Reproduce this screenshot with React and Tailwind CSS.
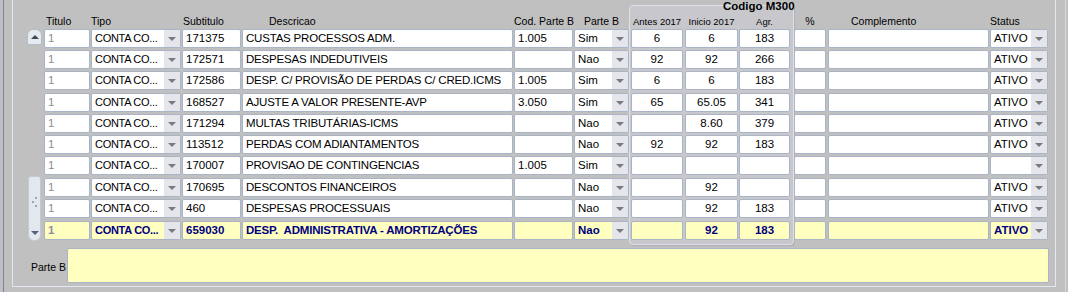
import React from "react";

const FONT = "font-['Liberation_Sans',Arial,sans-serif]";

// column geometry taken from the form (x positions relative to the first field)
const COLS = [
  { key: "titulo", label: "Titulo", w: "w-[46px]", ml: "ml-0", head: "pl-[2px] text-left text-[10.5px]", align: "text-left" },
  { key: "tipo", label: "Tipo", w: "w-[90px]", ml: "ml-[1px]", head: "pl-0 text-left text-[10.5px]", align: "text-left tracking-[-0.3px] text-[11px]", drop: true },
  { key: "sub", label: "Subtitulo", w: "w-[59px]", ml: "ml-[1px]", head: "pl-[1px] text-left text-[10.5px]", align: "text-left" },
  { key: "desc", label: "Descricao", w: "w-[271px]", ml: "ml-[1px]", head: "pl-[27px] text-left text-[10.5px]", align: "text-left tracking-[-0.2px]" },
  { key: "cod", label: "Cod. Parte B", w: "w-[59px]", ml: "ml-[1px]", head: "pl-0 text-left text-[10.5px]", align: "text-left" },
  { key: "parte", label: "Parte B", w: "w-[55px]", ml: "ml-[1px]", head: "pl-[10px] text-left text-[10.5px]", align: "text-left", drop: true },
  { key: "antes", label: "Antes 2017", w: "w-[52px]", ml: "ml-[2px]", head: "text-center text-[9.5px]", align: "text-center" },
  { key: "inicio", label: "Inicio 2017", w: "w-[53px]", ml: "ml-[2px]", head: "text-center text-[9.5px]", align: "text-center" },
  { key: "agr", label: "Agr.", w: "w-[51px]", ml: "ml-[1px]", head: "text-center text-[9.5px]", align: "text-center" },
  { key: "pct", label: "%", w: "w-[32px]", ml: "ml-[4px]", head: "text-center text-[10.5px]", align: "text-center" },
  { key: "comp", label: "Complemento", w: "w-[161px]", ml: "ml-[2px]", head: "pl-[23px] text-left text-[10.5px]", align: "text-left" },
  { key: "status", label: "Status", w: "w-[58px]", ml: "ml-[1px]", head: "pl-0 text-left text-[10.5px]", align: "text-left", drop: true },
];

const ROWS = [
  { sub: "171375", desc: "CUSTAS PROCESSOS ADM.", cod: "1.005", parte: "Sim", antes: "6", inicio: "6", agr: "183", status: "ATIVO" },
  { sub: "172571", desc: "DESPESAS INDEDUTIVEIS", cod: "", parte: "Nao", antes: "92", inicio: "92", agr: "266", status: "ATIVO" },
  { sub: "172586", desc: "DESP. C/ PROVISÃO DE PERDAS C/ CRED.ICMS", cod: "1.005", parte: "Sim", antes: "6", inicio: "6", agr: "183", status: "ATIVO" },
  { sub: "168527", desc: "AJUSTE A VALOR PRESENTE-AVP", cod: "3.050", parte: "Sim", antes: "65", inicio: "65.05", agr: "341", status: "ATIVO" },
  { sub: "171294", desc: "MULTAS TRIBUTÁRIAS-ICMS", cod: "", parte: "Nao", antes: "", inicio: "8.60", agr: "379", status: "ATIVO" },
  { sub: "113512", desc: "PERDAS COM ADIANTAMENTOS", cod: "", parte: "Nao", antes: "92", inicio: "92", agr: "183", status: "ATIVO" },
  { sub: "170007", desc: "PROVISAO DE CONTINGENCIAS", cod: "1.005", parte: "Sim", antes: "", inicio: "", agr: "", status: "" },
  { sub: "170695", desc: "DESCONTOS FINANCEIROS", cod: "", parte: "Nao", antes: "", inicio: "92", agr: "", status: "ATIVO" },
  { sub: "460", desc: "DESPESAS PROCESSUAIS", cod: "", parte: "Nao", antes: "", inicio: "92", agr: "183", status: "ATIVO" },
  { sub: "659030", desc: "DESP.  ADMINISTRATIVA - AMORTIZAÇÕES", cod: "", parte: "Nao", antes: "", inicio: "92", agr: "183", status: "ATIVO", sel: true },
];

// spacing between record rows (the form rows are not on an even pitch)
const ROW_GAP = ["mt-0", "mt-[2px]", "mt-[2px]", "mt-[3px]", "mt-[2px]", "mt-[2px]", "mt-[2px]", "mt-[3px]", "mt-[2px]", "mt-[3px]"];

const DownArrow = () => (
  <span className="block w-0 h-0 border-l-[4px] border-r-[4px] border-t-[4px] border-l-transparent border-r-transparent border-t-[#7a7a7a]" />
);

function Cell({ col, value, sel }) {
  const bg = sel ? "bg-[#ffffc0]" : "bg-white";
  const color =
    col.key === "titulo"
      ? sel ? "text-[#8c8ca8] font-bold" : "text-[#8c8c8c]"
      : sel ? "text-[#00007f] font-bold" : "text-black";

  return (
    <div className={`${col.w} ${col.ml} h-[19px] shrink-0 flex border border-[#a9b4c6] rounded-[2px] overflow-hidden ${bg}`}>
      <div className={`flex-1 min-w-0 px-[3px] text-[11.5px] leading-[17px] whitespace-pre overflow-hidden ${col.align} ${color}`}>
        {value}
      </div>
      {col.drop && (
        <div className="w-[16px] shrink-0 bg-[#e4e6ec] flex items-center justify-center">
          <DownArrow />
        </div>
      )}
    </div>
  );
}

export default function App() {
  return (
    <div className={`w-[1068px] h-[292px] bg-[#c0c0c0] flex overflow-hidden ${FONT}`}>
      <div className="w-[3px] shrink-0" />
      <div className="w-[1px] shrink-0 bg-[#7384a4]" />
      <div className="w-[8px] shrink-0" />

      {/* main block panel */}
      <div className="relative w-[1044px] h-[287px] shrink-0 border-l border-r border-b border-[#e3e7ef]">
        {/* Codigo M300 group */}
        <div className="absolute left-[616px] top-[5px] w-[165px] h-[240px] bg-[#c8c8cc] border border-[#dde1e8] rounded-[4px] shadow-[1px_1px_0_#b0b0b6]" />
        <div className="absolute left-[709px] top-0 text-[11.5px] font-bold text-black leading-[13px] px-[1px]">
          Codigo M300
        </div>

        <div className="relative flex flex-col">
          {/* column headings */}
          <div className="flex mt-[14px] h-[15px] pl-[31px]">
            {COLS.map(col => (
              <div key={col.key} className={`${col.w} ${col.ml} shrink-0 leading-[15px] text-black whitespace-nowrap ${col.head}`}>
                {col.label}
              </div>
            ))}
          </div>

          {/* records */}
          <div className="flex">
            <div className="w-[14px] shrink-0" />
            <div className="w-[15px] h-[211px] shrink-0 flex flex-col">
              <div className="h-[16px] rounded-t-[6px] rounded-b-[2px] bg-[#e6eaf1] border border-[#b4bdcc] flex items-center justify-center">
                <span className="block w-0 h-0 border-l-[4px] border-r-[4px] border-b-[4px] border-l-transparent border-r-transparent border-b-[#404858]" />
              </div>
              <div className="mt-auto mx-[1px] h-[65px] mb-[-1px] rounded-b-[6px] rounded-t-[3px] bg-[#e3e7ee] border border-[#c2c9d6] flex flex-col items-center">
                <div className="mt-[20px] flex flex-col gap-[2px] items-center">
                  <span className="block w-[2px] h-[2px] bg-[#9aa4b8] ml-[3px]" />
                  <span className="block w-[2px] h-[2px] bg-[#9aa4b8] ml-[-3px]" />
                  <span className="block w-[2px] h-[2px] bg-[#9aa4b8] ml-[3px]" />
                </div>
                <div className="mt-auto mb-[5px]">
                  <span className="block w-0 h-0 border-l-[4px] border-r-[4px] border-t-[4px] border-l-transparent border-r-transparent border-t-[#56607a]" />
                </div>
              </div>
            </div>
            <div className="w-[2px] shrink-0" />

            <div className="flex flex-col">
              {ROWS.map((row, i) => (
                <div key={i} className={`flex ${ROW_GAP[i]}`}>
                  {COLS.map(col => (
                    <Cell
                      key={col.key}
                      col={col}
                      sel={row.sel}
                      value={col.key === "titulo" ? "1" : col.key === "tipo" ? "CONTA CO..." : row[col.key] || ""}
                    />
                  ))}
                </div>
              ))}
            </div>
          </div>

          {/* Parte B */}
          <div className="flex items-center mt-[8px] pl-[18px]">
            <div className="w-[36px] shrink-0 text-[10.5px] text-black leading-[14px] pt-[3px] whitespace-nowrap">Parte B</div>
            <div className="w-[982px] h-[35px] shrink-0 bg-[#ffffc0] border border-[#a9b4c6] rounded-[2px]" />
          </div>
        </div>
      </div>

      <div className="w-[9px] shrink-0" />
      <div className="w-[1px] shrink-0 bg-[#d4d8e0]" />
    </div>
  );
}
